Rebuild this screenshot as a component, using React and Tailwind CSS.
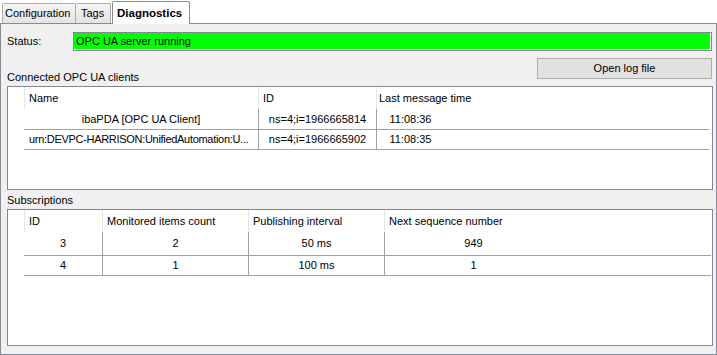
import React from "react";

const clients = [
  { name: "ibaPDA [OPC UA Client]", id: "ns=4;i=1966665814", time: "11:08:36", center: true },
  { name: "urn:DEVPC-HARRISON:UnifiedAutomation:U...", id: "ns=4;i=1966665902", time: "11:08:35" },
];

const subscriptions = [
  { id: "3", count: "2", interval: "50 ms", seq: "949", h: "h-[24px]" },
  { id: "4", count: "1", interval: "100 ms", seq: "1", h: "h-[20px]" },
];

const Tab = ({ label, active, className }) => (
  <div
    className={
      active
        ? `relative z-10 -mb-px h-[23px] bg-white border border-b-0 border-[#898c95] rounded-t-[2px] flex items-center font-bold text-[11.5px] ${className}`
        : `h-[20px] border border-b-0 border-[#acacac] rounded-t-[2px] bg-gradient-to-b from-[#f4f4f4] to-[#e4e4e4] flex items-center ${className}`
    }
  >
    {label}
  </div>
);

export default function App() {
  return (
    <div className="w-[717px] h-[355px] bg-white text-[11px] leading-[13px] text-black font-['Liberation_Sans',Arial,sans-serif] overflow-hidden">
      {/* tabs */}
      <div className="flex items-end h-[23px] pl-[2px]">
        <Tab label="Configuration" className="w-[74px] pl-[2px]" />
        <Tab label="Tags" className="w-[35px] border-l-0 pl-[5px]" />
        <Tab label="Diagnostics" active className="ml-px w-[78px] pl-[4px]" />
      </div>

      {/* tab page */}
      <div className="h-[332px] border border-[#898c95] bg-[#f0f0f0]">
        <div className="mt-[8px] flex items-center pl-[6px] pr-[4px]">
          <div className="w-[66px]">Status:</div>
          <div className="flex-1 h-[19px] border border-[#828790] bg-white pr-px pb-px">
            <div className="h-full bg-[#00ff00] pl-[2px] flex items-center">OPC UA server running</div>
          </div>
        </div>

        <div className="mt-[7px] flex justify-between items-start pl-[6px] pr-[4px]">
          <div className="mt-[13px]">Connected OPC UA clients</div>
          <button className="w-[175px] h-[21px] border border-[#adadad] bg-[#e1e1e1] flex items-center justify-center">
            Open log file
          </button>
        </div>

        {/* clients list */}
        <div className="mt-[2px] ml-[6px] mr-[3px] h-[104px] border border-[#828790] bg-white">
          <div className="flex h-[22px] pl-[16px]">
            <div className="w-[234px] border-l border-[#e5e5e5] pl-[4px] flex items-center">Name</div>
            <div className="w-[118px] border-l border-[#e5e5e5] pl-[4px] flex items-center">ID</div>
            <div className="flex-1 border-l border-[#e5e5e5] pl-[2px] flex items-center">Last message time</div>
          </div>
          <div className="ml-[16px] mr-[3px]">
            {clients.map((c, i) => (
              <div key={c.id} className={`flex border-b border-[#a0a0a0] ${i === 0 ? "h-[21px]" : "h-[20px]"}`}>
                <div
                  className={`w-[234px] flex items-center whitespace-nowrap ${
                    c.center ? "justify-center" : "pl-[5px] tracking-[-0.3px]"
                  }`}
                >
                  {c.name}
                </div>
                <div className="w-[118px] border-l border-[#a0a0a0] flex items-center justify-center">{c.id}</div>
                <div className="w-[68px] border-l border-[#a0a0a0] flex items-center justify-center">{c.time}</div>
              </div>
            ))}
          </div>
        </div>

        <div className="mt-[4px] pl-[6px]">Subscriptions</div>

        {/* subscriptions list */}
        <div className="mt-[2px] ml-[6px] mr-[3px] h-[137px] border border-[#828790] bg-white">
          <div className="flex h-[22px] pl-[16px]">
            <div className="w-[78px] border-l border-[#e5e5e5] pl-[4px] flex items-center">ID</div>
            <div className="w-[146px] border-l border-[#e5e5e5] pl-[4px] flex items-center">Monitored items count</div>
            <div className="w-[136px] border-l border-[#e5e5e5] pl-[4px] flex items-center">Publishing interval</div>
            <div className="flex-1 border-l border-[#e5e5e5] pl-[4px] flex items-center">Next sequence number</div>
          </div>
          <div className="ml-[16px] mr-[1px]">
            {subscriptions.map((s) => (
              <div key={s.id} className={`flex border-b border-[#a0a0a0] ${s.h}`}>
                <div className="w-[78px] flex items-center justify-center">{s.id}</div>
                <div className="w-[146px] border-l border-[#a0a0a0] flex items-center justify-center">{s.count}</div>
                <div className="w-[136px] border-l border-[#a0a0a0] flex items-center justify-center">{s.interval}</div>
                <div className="w-[178px] border-l border-[#a0a0a0] flex items-center justify-center">{s.seq}</div>
              </div>
            ))}
          </div>
        </div>
      </div>
    </div>
  );
}
